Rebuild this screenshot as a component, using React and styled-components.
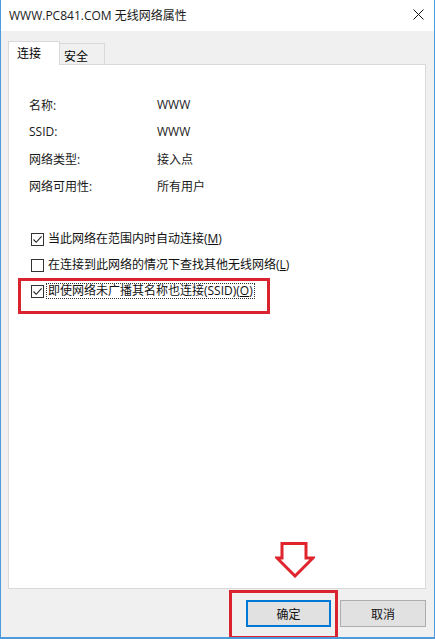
import React from 'react'
import styled, {createGlobalStyle, css} from 'styled-components'

const GlobalStyle = createGlobalStyle`
  html, body {
    margin: 0;
    padding: 0;
    background: #ffffff;
  }
  body {
    font-family: "Open Sans", "Noto Sans CJK SC", sans-serif;
    font-size: 12px;
    color: #000;
  }
`

const info = [
  ['名称:', 'WWW'],
  ['SSID:', 'WWW'],
  ['网络类型:', '接入点'],
  ['网络可用性:', '所有用户'],
]

const options = [
  {text: '当此网络在范围内时自动连接', key: 'M', checked: true},
  {text: '在连接到此网络的情况下查找其他无线网络', key: 'L', checked: false},
  {text: '即使网络未广播其名称也连接(SSID)', key: 'O', checked: true, focused: true},
]

export default function App() {
  return (
    <Window>
      <GlobalStyle />
      <TitleBar>
        <Title>WWW.PC841.COM 无线网络属性</Title>
        <Close>
          <svg width="11" height="11" viewBox="0 0 11 11">
            <path d="M0.5 0.5 L10.5 10.5 M10.5 0.5 L0.5 10.5" stroke="#111" strokeWidth="1" />
          </svg>
        </Close>
      </TitleBar>
      <Body>
        <Tabs>
          <Tab active>连接</Tab>
          <Tab>安全</Tab>
        </Tabs>
        <Panel>
          <InfoGrid>
            {info.map(([label, value]) => (
              <React.Fragment key={label}>
                <Label>{label}</Label>
                <Value>{value}</Value>
              </React.Fragment>
            ))}
          </InfoGrid>
          <Options>
            {options.map((option) => (
              <Option key={option.key}>
                <Box>
                  {option.checked && (
                    <svg width="11" height="11" viewBox="0 0 11 11">
                      <path d="M1.5 5.5 L4.2 8.3 L9.6 2.4" fill="none" stroke="#222" strokeWidth="1.1" />
                    </svg>
                  )}
                </Box>
                <OptionText focused={option.focused}>
                  {option.text}(<u>{option.key}</u>)
                </OptionText>
              </Option>
            ))}
          </Options>
          <OptionMark />
          <Arrow>
            <svg width="40" height="36" viewBox="0 0 40 36">
              <path
                d="M7 1.5 H31 V16 H38 L20 34 L2 16 H7 Z"
                fill="none"
                stroke="#e0242c"
                strokeWidth="3"
                strokeLinejoin="miter"
              />
            </svg>
          </Arrow>
        </Panel>
        <Footer>
          <ButtonMark>
            <Button primary>确定</Button>
          </ButtonMark>
          <Button>取消</Button>
        </Footer>
      </Body>
    </Window>
  )
}

const Window = styled.div`
  width: 435px;
  height: 639px;
  box-sizing: border-box;
  border: 1px solid #4d9bdc;
  border-top: none;
  border-bottom-width: 2px;
  display: flex;
  flex-direction: column;
  background: #f0f0f0;
  overflow: hidden;
`
const TitleBar = styled.div`
  height: 31px;
  flex: none;
  background: #ffffff;
  display: flex;
  align-items: center;
  justify-content: space-between;
  padding: 0 10px 0 8px;
`
const Title = styled.div`
  font-size: 12px;
  color: #1a1a1a;
  margin-top: -2px;
`
const Close = styled.div`
  width: 11px;
  height: 11px;
  display: flex;
  margin-top: -2px;
`
const Body = styled.div`
  flex: 1;
  display: flex;
  flex-direction: column;
  padding: 10px 8px 0 7px;
`
const Tabs = styled.div`
  display: flex;
  align-items: flex-end;
  height: 24px;
  position: relative;
  z-index: 1;
  margin-bottom: -1px;
`
const Tab = styled.div`
  box-sizing: border-box;
  border: 1px solid #d9d9d9;
  font-size: 12px;
  display: flex;
  align-items: center;
  ${({active}) => active ? css`
    width: 52px;
    height: 24px;
    background: #ffffff;
    border-bottom: none;
    padding: 0 0 2px 8px;
  ` : css`
    width: 45px;
    height: 22px;
    background: #f0f0f0;
    border-left: none;
    padding: 3px 0 0 4px;
  `}
`
const Panel = styled.div`
  position: relative;
  box-sizing: border-box;
  height: 525px;
  background: #ffffff;
  border: 1px solid #d9d9d9;
  padding: 26px 0 0 20px;
`
const InfoGrid = styled.div`
  display: grid;
  grid-template-columns: 128px auto;
  grid-auto-rows: 27px;
  align-items: center;
`
const Label = styled.div`
  color: #1a1a1a;
`
const Value = styled.div`
  color: #1a1a1a;
`
const Options = styled.div`
  margin-top: 27px;
  display: flex;
  flex-direction: column;
`
const Option = styled.div`
  height: 26px;
  display: flex;
  align-items: center;
  padding-left: 2px;
`
const Box = styled.div`
  width: 13px;
  height: 13px;
  box-sizing: border-box;
  border: 1px solid #333333;
  background: #ffffff;
  display: flex;
  align-items: center;
  justify-content: center;
  margin-right: 2px;
`
const OptionText = styled.div`
  padding: 0 1px;
  line-height: 14px;
  border: 1px dotted transparent;
  color: #111;
  ${({focused}) => focused && css`
    border-color: #333;
  `}
`
const OptionMark = styled.div`
  position: absolute;
  left: 9px;
  top: 213px;
  width: 252px;
  height: 36px;
  box-sizing: border-box;
  border: 3px solid #d9232e;
`
const Arrow = styled.div`
  position: absolute;
  left: 266px;
  top: 477px;
  width: 40px;
  height: 36px;
`
const Footer = styled.div`
  display: flex;
  justify-content: flex-end;
  align-items: flex-start;
  gap: 9px;
  padding-top: 11px;
`
const ButtonMark = styled.div`
  position: relative;
  &::after {
    content: '';
    position: absolute;
    left: -17px;
    right: -7px;
    top: -10px;
    bottom: -12px;
    border: 3px solid #d9232e;
  }
`
const Button = styled.div`
  box-sizing: border-box;
  height: 27px;
  display: flex;
  align-items: center;
  justify-content: center;
  background: #e1e1e1;
  border: 1px solid #adadad;
  color: #111;
  font-size: 12px;
  ${({primary}) => primary ? css`
    width: 85px;
    border: 2px solid #0078d7;
  ` : css`
    width: 86px;
  `}
`
